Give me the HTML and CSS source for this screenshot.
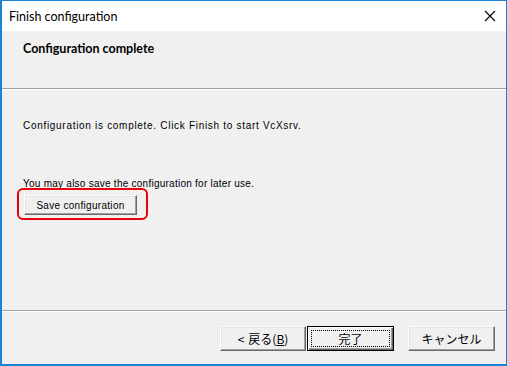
FILE: index.html
```html
<!DOCTYPE html>
<html lang="ja">
<head>
    <meta charset="UTF-8">
    <meta name="viewport" content="width=device-width, initial-scale=1.0">
    <title>Finish configuration</title>
    <link rel="stylesheet" href="styles.css">
</head>
<body>
    <div class="window">
        <div class="titlebar">
            <span class="title">Finish configuration</span>
            <svg class="close" width="12" height="12" viewBox="0 0 12 12">
                <path d="M1 1 L11 11 M11 1 L1 11" stroke="#000" stroke-width="1.1" fill="none"/>
            </svg>
        </div>

        <div class="header">
            <h1>Configuration complete</h1>
        </div>

        <div class="content">
            <p class="line first">Configuration is complete. Click Finish to start VcXsrv.</p>
            <p class="line second">You may also save the configuration for later use.</p>
            <div class="save-wrap">
                <button class="btn save">Save configuration</button>
                <!-- annotation ring -->
                <span class="highlight"></span>
            </div>
        </div>

        <div class="footer">
            <button class="btn back"><span class="lt">&lt;</span>戻る(<u>B</u>)</button>
            <button class="btn default"><span class="focus">完了</span></button>
            <button class="btn cancel">キャンセル</button>
        </div>
    </div>
</body>
</html>
```

FILE: styles.css
```css
* {
    box-sizing: border-box;
}

body {
    margin: 0;
    font-family: "Liberation Sans", "Noto Sans CJK JP", sans-serif;
    background: #f0f0f0;
}

.window {
    width: 507px;
    height: 366px;
    display: flex;
    flex-direction: column;
    border: 1px solid #1883d7;
    border-left-width: 2px;
    border-bottom-width: 2px;
    background: #f0f0f0;
}

.titlebar {
    height: 30px;
    background: #fff;
    display: flex;
    align-items: center;
    justify-content: space-between;
    padding: 0 10px 0 7px;
}

.title {
    font-family: Lato, "Noto Sans", sans-serif;
    font-size: 12.5px;
    color: #000;
}

.header {
    height: 58px;
    padding: 10px 0 0 21px;
    border-bottom: 1px solid #a0a0a0;
    box-shadow: 0 1px 0 #fff;
}

h1 {
    margin: 0;
    font-family: Lato, "Noto Sans", sans-serif;
    font-size: 12.5px;
    line-height: 16px;
    font-weight: bold;
    color: #000;
}

.content {
    flex: 1;
    padding: 30px 0 0 21px;
    border-bottom: 1px solid #a0a0a0;
}

.line {
    margin: 0;
    font-size: 10px;
    line-height: 14px;
    color: #000;
}

.line.first {
    letter-spacing: 0.7px;
}

.line.second {
    margin-top: 44px;
    letter-spacing: 0.25px;
}

.save-wrap {
    position: relative;
    display: inline-block;
    margin: 4px 0 0 1px;
}

.highlight {
    position: absolute;
    left: -7px;
    top: -7px;
    right: -11px;
    bottom: -5px;
    border: 2px solid #e8000b;
    border-radius: 6px;
}

.btn {
    display: flex;
    align-items: center;
    justify-content: center;
    background: #f0f0f0;
    border: 1px solid;
    border-color: #fff #696969 #696969 #fff;
    box-shadow: inset -1px -1px 0 #a0a0a0, inset 1px 1px 0 #e3e3e3;
    padding: 0;
    font-size: 10px;
    color: #000;
    letter-spacing: 0.3px;
}

.save {
    width: 113px;
    height: 20px;
}

.footer {
    height: 53px;
    display: flex;
    align-items: flex-start;
    padding: 15px 0 0 218px;
    box-shadow: inset 0 1px 0 #fff;
}

.footer .btn {
    height: 25px;
    font-family: "Noto Sans CJK JP", sans-serif;
    font-size: 12px;
    letter-spacing: 0;
}

.back {
    width: 86px;
}

.back .lt {
    margin-right: 4px;
}

.back u {
    text-decoration: underline;
}

.default {
    width: 87px;
    margin-left: 1px;
    border: 1px solid #000;
    box-shadow: inset 1px 1px 0 #fff, inset -1px -1px 0 #696969, inset -2px -2px 0 #a0a0a0;
}

.focus {
    display: flex;
    align-items: center;
    justify-content: center;
    width: 79px;
    height: 17px;
    border: 1px dotted #000;
}

.cancel {
    width: 87px;
    margin-left: 14px;
}
```
